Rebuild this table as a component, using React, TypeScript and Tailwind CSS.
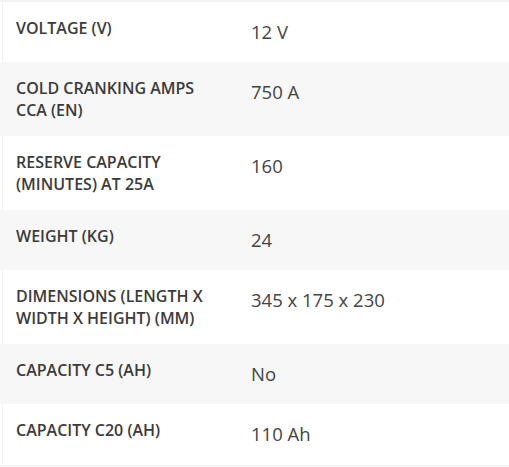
const specs: { label: string; value: string }[] = [
  { label: 'Voltage (V)', value: '12 V' },
  { label: 'Cold cranking amps CCA (EN)', value: '750 A' },
  { label: 'Reserve capacity (minutes) at 25A', value: '160' },
  { label: 'Weight (kg)', value: '24' },
  { label: 'Dimensions (Length x Width x Height) (mm)', value: '345 x 175 x 230' },
  { label: 'Capacity C5 (Ah)', value: 'No' },
  { label: 'Capacity C20 (Ah)', value: '110 Ah' },
];

export default function App() {
  return (
    <div
      className="w-[509px] h-[467px] bg-white overflow-hidden"
      style={{ fontFamily: '"Open Sans", "Liberation Sans", sans-serif' }}
    >
      <div className="h-[2px] bg-[#f2f2f2]" />
      {specs.map((row, i) => (
        <div
          key={row.label}
          className={
            i % 2 === 0
              ? 'flex items-start bg-white border-l border-[#f2f2f2] ml-[2px] py-[15px]'
              : 'flex items-start bg-[#f7f7f7] py-[15px] pl-[3px]'
          }
        >
          <div className="w-[235px] shrink-0 px-[13px] text-[16px] leading-[22px] font-semibold uppercase text-[#3b3b3b]">
            {row.label}
          </div>
          <div className="px-[13px] text-[18.5px] leading-[30px] text-[#444]">
            {row.value}
          </div>
        </div>
      ))}
      <div className="mt-[1px] h-[1px] bg-[#f2f2f2]" />
    </div>
  );
}
